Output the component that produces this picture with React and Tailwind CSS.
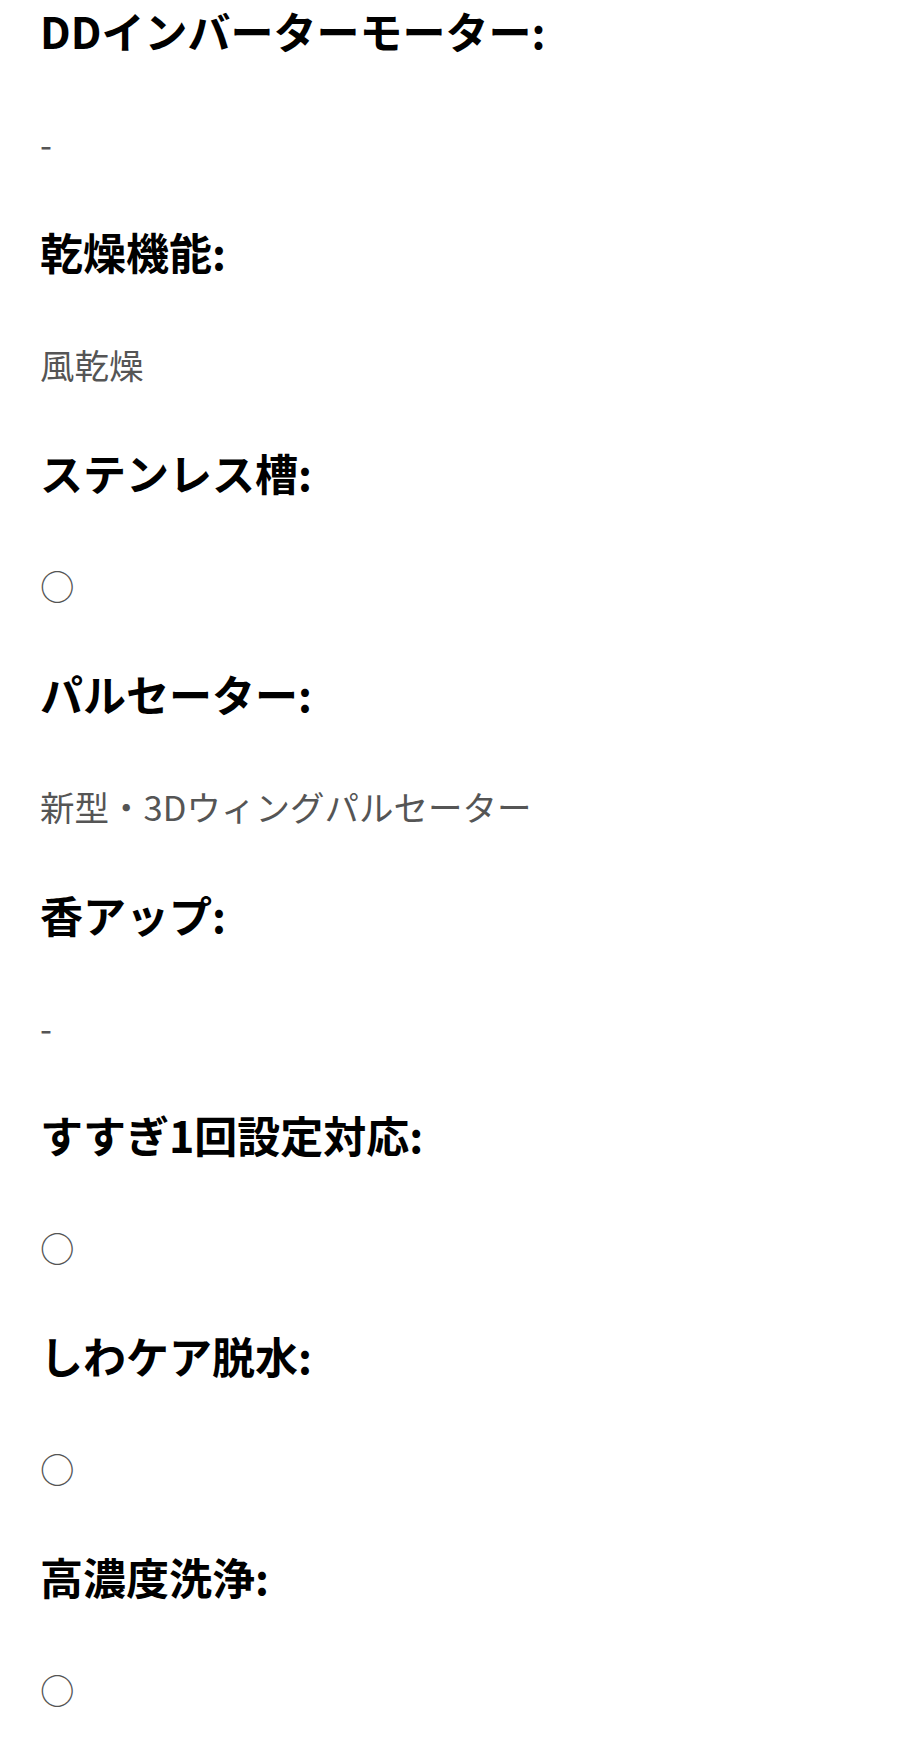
export default function App() {
  const items = [
    { h: "DDインバーターモーター:", v: "-" },
    { h: "乾燥機能:", v: "風乾燥" },
    { h: "ステンレス槽:", v: "○" },
    { h: "パルセーター:", v: "新型・3Dウィングパルセーター" },
    { h: "香アップ:", v: "-" },
    { h: "すすぎ1回設定対応:", v: "○" },
    { h: "しわケア脱水:", v: "○" },
    { h: "高濃度洗浄:", v: "○" },
  ];
  return (
    <div
      className="min-h-[1749px] w-[909px] bg-white pl-[40px] pt-[3px]"
      style={{ fontFamily: '"Noto Sans CJK JP", "Noto Sans", sans-serif' }}
    >
      <div className="flex flex-col gap-[57.9px]">
        {items.map((it, i) => (
          <div key={i} className="flex flex-col">
            <h3 className="text-[43px] font-bold leading-[54px] text-black">{it.h}</h3>
            <p className="mt-[64px] text-[34.5px] leading-[45px] text-[#555]">{it.v}</p>
          </div>
        ))}
      </div>
    </div>
  );
}
